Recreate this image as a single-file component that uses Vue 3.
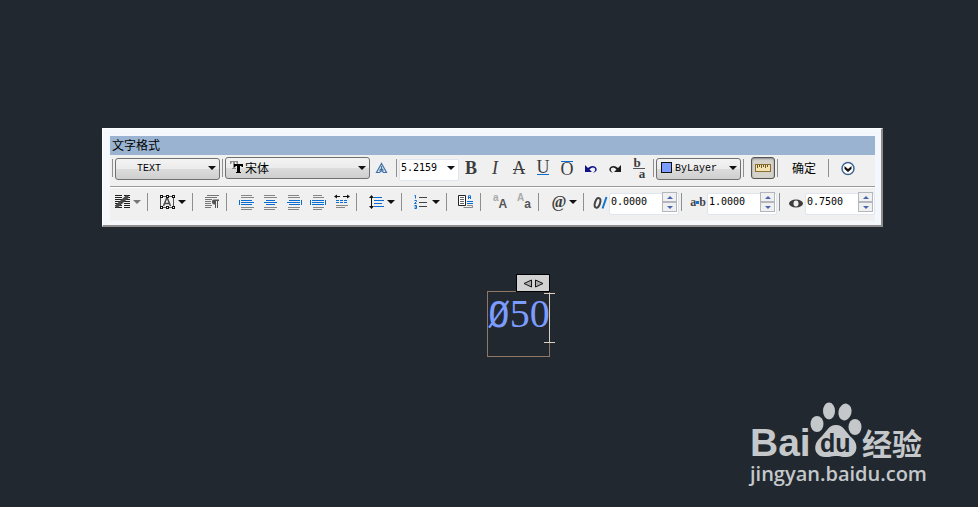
<script setup>
import { ref } from 'vue'

const textStyle = ref('TEXT')
const font = ref('宋体')
const height = ref('5.2159')
const color = ref('ByLayer')
const oblique = ref('0.0000')
const tracking = ref('1.0000')
const widthFactor = ref('0.7500')

const aligns = [
  { name: '左对齐', gray: 'M3 1.5h11M3 3.5h13M3 13.5h13M3 15.5h11', blue: 'M3 6.5h11M3 8.5h13M3 10.5h11M1.5 6v5' },
  { name: '居中', gray: 'M2 1.5h11M2 3.5h13M2 13.5h13M2 15.5h11', blue: 'M4 6.5h9M2 8.5h13M4 10.5h9' },
  { name: '右对齐', gray: 'M2 1.5h11M2 3.5h12M2 13.5h12M2 15.5h11', blue: 'M3 6.5h11M1 8.5h13M3 10.5h11M15.5 6v5' },
  { name: '对正', gray: 'M3 1.5h9M3 3.5h11M3 13.5h11M3 15.5h9', blue: 'M2 6.5h12M2 8.5h12M2 10.5h12M.5 6v5M15.5 6v5' },
]

function step(model, delta) {
  model.value = (parseFloat(model.value) + delta).toFixed(4)
}
const spins = [
  { id: 'oblique', label: '倾斜角度', model: oblique, delta: 1 },
  { id: 'tracking', label: '追踪', model: tracking, delta: 0.1 },
  { id: 'width', label: '宽度因子', model: widthFactor, delta: 0.1 },
]
</script>

<template>
  <main class="page">
    <section class="panel" aria-label="文字格式">
      <h1 class="title">文字格式</h1>

      <div class="row row-top">
        <i class="sep tight"></i>
        <div class="combo style-combo">
          <select v-model="textStyle" aria-label="样式"><option>TEXT</option></select>
          <svg class="caret" viewBox="0 0 8 4"><path d="M0 0h8L4 4z" /></svg>
        </div>
        <i class="sep tight"></i>
        <div class="combo font-combo">
          <svg class="lead" viewBox="0 0 14 14">
            <path d="M0 1h8v3H7L6 2H5v6h1v1H2V8h1V2H2L1 4H0z" fill="#8a8a8a" />
            <path d="M4 4h9v3h-1l-1-1h-1v6h1v1H6v-1h1V6H6L5 7H4z" fill="#000" />
          </svg>
          <select v-model="font" aria-label="字体"><option>宋体</option></select>
          <svg class="caret" viewBox="0 0 8 4"><path d="M0 0h8L4 4z" /></svg>
        </div>
        <button class="tool" aria-label="注释性">
          <svg viewBox="0 0 16 16" fill="none" stroke="#3f72a8" stroke-width="1.2">
            <path d="M7.500 3.500L2.500 12.500H5.500L7.500 10.500L9.500 12.500H12.500ZM7.500 6V10M5.500 10.500L7.500 8.500L9.500 10.500" />
          </svg>
        </button>
        <i class="sep tight"></i>
        <div class="combo-box">
          <input v-model="height" aria-label="文字高度" />
          <svg class="caret" viewBox="0 0 8 4"><path d="M0 0h8L4 4z" /></svg>
        </div>
        <button class="tool glyph bold" aria-label="粗体">B</button>
        <button class="tool glyph italic" aria-label="斜体">I</button>
        <button class="tool glyph strike" aria-label="删除线">A</button>
        <button class="tool glyph under" aria-label="下划线">U</button>
        <button class="tool glyph over" aria-label="上划线">O</button>
        <button class="tool" aria-label="放弃">
          <svg viewBox="0 0 16 16">
            <path d="M2 5v7h7L6.500 9.500Q9 6.500 11.500 8Q13.500 10 10 13Q16 10.500 12.500 7Q9 4.500 5 8z" fill="#10108a" />
          </svg>
        </button>
        <button class="tool" aria-label="重做">
          <svg viewBox="0 0 16 16">
            <path d="M14 5v7H7l2.500-2.500Q7 6.500 4.500 8Q2.500 10 6 13Q0 10.500 3.500 7Q7 4.500 11 8z" fill="#1c1c1c" />
          </svg>
        </button>
        <button class="tool stack" aria-label="堆叠"><span>b</span><span>a</span></button>
        <i class="sep tight"></i>
        <div class="combo color-combo">
          <i class="swatch"></i>
          <select v-model="color" aria-label="颜色"><option>ByLayer</option></select>
          <svg class="caret" viewBox="0 0 8 4"><path d="M0 0h8L4 4z" /></svg>
        </div>
        <i class="sep tight"></i>
        <button class="ruler" aria-label="标尺" aria-pressed="true">
          <svg viewBox="0 0 16 8">
            <rect x=".5" y=".5" width="15" height="7" fill="#f4e3b0" stroke="#8b6f2e" />
            <path d="M2.500 1v3M4.500 1v2M6.500 1v3M8.500 1v2M10.500 1v3M12.500 1v2" stroke="#6f5722" />
          </svg>
        </button>
        <i class="sep tight"></i>
        <button class="ok">确定</button>
        <i class="sep tight"></i>
        <button class="more" aria-label="选项">
          <svg viewBox="0 0 16 16">
            <circle cx="8" cy="8.500" r="6" fill="#fff" stroke="#3d6795" stroke-width="1.500" />
            <path d="M4.500 6l3.500 3 3.500-3v3L8 12 4.500 9z" fill="#111" />
          </svg>
        </button>
      </div>

      <div class="row row-bottom">
        <button class="drop" aria-label="分栏">
          <svg viewBox="0 0 16 16">
            <path d="M0 1.500h7M9 1.500h6M0 3.500h7M9 3.500h6M0 5.500h7M9 5.500h6M0 7.500h7M9 7.500h6M0 9.500h7M9 9.500h6M0 11.500h7M9 11.500h6M0 13.500h7M9 13.500h6" stroke="#222" />
            <path d="M1 13L13 2" stroke="#4a4a4a" stroke-width="3.500" />
          </svg>
          <svg class="caret dim" viewBox="0 0 8 4"><path d="M0 0h8L4 4z" /></svg>
        </button>
        <i class="sep"></i>
        <button class="drop" aria-label="多行文字对正">
          <svg viewBox="0 0 16 16">
            <path d="M.5 2.500h13v11h-13z" fill="none" stroke="#555" />
            <path d="M3.500 12L6.500 4.500h1L10.500 12M4.500 9.500h5" fill="none" stroke="#4a4a4a" stroke-width="1.500" />
            <path d="M0 1h3v3H0zM6 1h3v3H6zM12 1h3v3h-3zM0 12h3v3H0zM6 12h3v3H6zM12 12h3v3h-3z" fill="#111" />
            <path d="M1 2h1v1H1zM7 2h1v1H7zM13 2h1v1h-1zM1 13h1v1H1zM7 13h1v1H7zM13 13h1v1h-1z" fill="#fff" />
          </svg>
          <svg class="caret" viewBox="0 0 8 4"><path d="M0 0h8L4 4z" /></svg>
        </button>
        <i class="sep"></i>
        <button class="tool" aria-label="段落">
          <svg viewBox="0 0 16 16">
            <path d="M3 1.500h12M1 3.500h12M1 5.500h7M1 7.500h6M1 9.500h6M1 11.500h7M1 13.500h6" stroke="#777" />
            <path d="M15 5.500H10a2.500 2.500 0 0 0 1 5v3.500h1V7h1v7h1V7h1z" fill="#555" />
          </svg>
        </button>
        <i class="sep"></i>
        <button v-for="a in aligns" :key="a.name" class="tool" :aria-label="a.name">
          <svg viewBox="0 0 16 16">
            <path :d="a.gray" stroke="#858585" />
            <path :d="a.blue" stroke="#0a6cd0" />
          </svg>
        </button>
        <button class="tool" aria-label="分布">
          <svg viewBox="0 0 16 16">
            <path d="M1 2.500h5M9 2.500h6" stroke="#111" />
            <path d="M0 2.500L3 .5v4zM16 2.500L13 .5v4z" fill="#111" />
            <path d="M2 6.500h12M2 8.500h12" stroke="#0a6cd0" stroke-dasharray="3 1" />
            <path d="M2 11.500h12M2 13.500h9" stroke="#858585" />
          </svg>
        </button>
        <i class="sep"></i>
        <button class="drop" aria-label="行距">
          <svg viewBox="0 0 16 16">
            <path d="M2.500 3v10" stroke="#111" />
            <path d="M2.500 1L0 4h5zM2.500 15L0 12h5z" fill="#111" />
            <path d="M5 3.500h8M5 6.500h10M5 9.500h8M5 12.500h10" stroke="#0a6cd0" />
          </svg>
          <svg class="caret" viewBox="0 0 8 4"><path d="M0 0h8L4 4z" /></svg>
        </button>
        <i class="sep"></i>
        <button class="drop" aria-label="编号">
          <svg viewBox="0 0 16 16">
            <path d="M.5 1.500h1v3M.5 6.500h2v1L.5 9.500h2M.5 11.500h2v3H.5M.5 13h2" fill="none" stroke="#0a6cd0" />
            <path d="M5 3.500h8M5 8.500h8M5 12.500h8" stroke="#444" />
          </svg>
          <svg class="caret" viewBox="0 0 8 4"><path d="M0 0h8L4 4z" /></svg>
        </button>
        <i class="sep"></i>
        <button class="tool" aria-label="插入字段">
          <svg viewBox="0 0 16 16">
            <path d="M.5 1.500h7v10h-7z" fill="#fff" stroke="#222" />
            <path d="M2 3.500h4M2 5.500h4M2 7.500h4M2 9.500h4" stroke="#666" />
            <path d="M10.500 5V2l1-1 1 1v3M10.500 3.500h2M9 7.500h6M9 9.500h6" fill="none" stroke="#0a6cd0" />
            <path d="M5.500 13.500h9v-2H9" fill="none" stroke="#888" />
          </svg>
        </button>
        <i class="sep"></i>
        <button class="tool case" aria-label="大写"><span>a</span><span>A</span></button>
        <button class="tool case" aria-label="小写"><span>A</span><span>a</span></button>
        <i class="sep"></i>
        <button class="drop at" aria-label="符号">
          <span>@</span>
          <svg class="caret" viewBox="0 0 8 4"><path d="M0 0h8L4 4z" /></svg>
        </button>
        <template v-for="s in spins" :key="s.id">
          <i class="sep"></i>
          <label class="mark" :for="s.id" :aria-label="s.label">
            <svg v-if="s.id === 'oblique'" viewBox="0 0 16 16">
              <ellipse cx="5.500" cy="9" rx="2.500" ry="5" transform="rotate(18 6 9)" fill="none" stroke="#444" stroke-width="2" />
              <path d="M10.500 14.500L14.500 3" stroke="#1273d0" stroke-width="2" />
            </svg>
            <span v-else-if="s.id === 'tracking'" class="ab">a<i></i>b</span>
            <svg v-else viewBox="0 0 16 16">
              <ellipse cx="8" cy="9.500" rx="7" ry="4" fill="#3c3c3c" />
              <ellipse cx="8" cy="9.500" rx="2.500" ry="3" fill="#f0f0f0" />
            </svg>
          </label>
          <div class="spin">
            <input :id="s.id" v-model="s.model.value" />
            <span class="steps">
              <button aria-label="增加" @click="step(s.model, s.delta)">
                <svg viewBox="0 0 6 3"><path d="M3 0l3 3H0z" /></svg>
              </button>
              <button aria-label="减少" @click="step(s.model, -s.delta)">
                <svg viewBox="0 0 6 3"><path d="M0 0h6L3 3z" /></svg>
              </button>
            </span>
          </div>
        </template>
      </div>
    </section>

    <div class="mtext">
      <span class="tab">
        <svg viewBox="0 0 20 9" fill="#aaa" stroke="#111">
          <path d="M8.500 1v7L1 4.500zM12.500 1v7L20 4.500z" />
        </svg>
      </span>
      <span class="dia">Ø</span><span class="digits">50</span>
      <i class="cursor"></i>
    </div>

    <div class="watermark">
      <div class="brand">
        <span class="bai">Bai</span>
        <span class="paw">
          <svg viewBox="0 0 52 56">
            <ellipse cx="7" cy="22" rx="6.500" ry="8" />
            <ellipse cx="19" cy="9" rx="6" ry="8.500" />
            <ellipse cx="35" cy="10" rx="6.500" ry="8.500" transform="rotate(12 35 10)" />
            <ellipse cx="45" cy="25" rx="6.500" ry="8" />
            <path d="M26 23C34 23 36 31 42 36C49 42 48 54 37 55C32 55.500 31 54 26 54C21 54 20 55.500 15 55C3 54 3 42 10 36C16 31 18 23 26 23Z" />
          </svg>
          <span class="du">du</span>
        </span>
        <span class="exp">经验</span>
      </div>
      <div class="url">jingyan.baidu.com</div>
    </div>
  </main>
</template>

<style>
body {
  background: #212830;
}
</style>

<style scoped>
.page {
  position: relative;
  min-height: 100vh;
  box-sizing: border-box;
  padding: 128px 95px 0 102px;
  overflow: hidden;
  background: #212830;
  font-family: "Liberation Sans", "Noto Sans CJK SC", sans-serif;
}
* {
  box-sizing: border-box;
}
button {
  padding: 0;
  border: 0;
  background: none;
  color: #3c3c3c;
}
.panel {
  padding: 7px 6px 4px 7px;
  background: #f4f7fc;
  border: 1px solid #fff;
  border-right: 2px solid #8c8c8c;
  border-bottom: 2px solid #8c8c8c;
}
.title {
  height: 19px;
  margin: 0;
  padding-left: 2px;
  background: #99b3d1;
  color: #000;
  font: 400 12px/18px "Noto Sans CJK SC", sans-serif;
}
.row {
  display: flex;
  background: #f0f0f0;
}
.row-top {
  height: 31px;
  padding-top: 2px;
}
.row-bottom {
  height: 35px;
  padding-top: 4px;
  border-top: 1px solid #999;
  box-shadow: inset 0 1px #fff;
}
.row > * {
  flex: none;
  height: 22px;
}
.sep {
  width: 1px;
  margin: 0 7px 0 2px;
  background: #8f8f8f;
  background-clip: content-box;
  padding: 2px 0;
}
.sep.tight {
  margin: 0 2px;
}
.caret {
  width: 8px;
  height: 4px;
  fill: #111;
}
.caret.dim {
  fill: #777;
}
.combo,
.combo-box {
  position: relative;
}
.combo select {
  width: 100%;
  height: 22px;
  padding: 0 16px 0 21px;
  appearance: none;
  border: 1px solid #707070;
  border-radius: 3px;
  background: linear-gradient(#f3f3f3, #ebebeb 50%, #dcdcdc 50%, #cfcfcf);
  color: #000;
  font: 10px "Liberation Mono", monospace;
}
.combo .caret,
.combo-box .caret {
  position: absolute;
  top: 9px;
  right: 4px;
}
.style-combo {
  width: 105px;
}
.font-combo {
  width: 145px;
}
.font-combo select {
  padding-left: 19px;
  padding-bottom: 2px;
  font: 12px "Noto Sans CJK SC", sans-serif;
}
.color-combo {
  width: 85px;
}
.color-combo select {
  padding-left: 18px;
}
.lead {
  position: absolute;
  top: 3px;
  left: 5px;
  width: 14px;
  height: 14px;
}
.swatch {
  position: absolute;
  top: 5px;
  left: 5px;
  width: 11px;
  height: 11px;
  border: 1px solid #111;
  background: #7c9cff;
}
input {
  width: 100%;
  height: 22px;
  padding: 0 1px 4px;
  border: 1px solid #e0e5ee;
  border-radius: 2px;
  background: #fff;
  color: #000;
  font: 10px "DejaVu Sans Mono", monospace;
}
.combo-box {
  width: 60px;
}
.tool {
  display: flex;
  align-items: center;
  justify-content: center;
  width: 24px;
}
.tool svg,
.drop svg:first-child,
.mark svg,
.more svg {
  flex: none;
  width: 16px;
  height: 16px;
}
.glyph {
  position: relative;
  font: 18px/22px "Liberation Serif", serif;
}
.bold {
  font-weight: 700;
}
.italic {
  font-style: italic;
}
.strike::after,
.under::after,
.over::after {
  content: "";
  position: absolute;
  left: 6px;
  right: 6px;
  height: 1px;
  background: #0a6cd0;
}
.strike::after {
  top: 12px;
  background: #3c3c3c;
}
.under {
  padding-bottom: 2px;
}
.under::after {
  bottom: 4px;
}
.over {
  padding-top: 2px;
}
.over::after {
  top: 4px;
}
.stack {
  flex-direction: column;
  font: 700 13px/9px "Liberation Serif", serif;
}
.stack span:first-child {
  padding: 0 4px 1px 0;
  border-bottom: 1px solid #555;
}
.stack span:last-child {
  padding-left: 6px;
}
.ruler {
  display: flex;
  align-items: center;
  justify-content: center;
  width: 24px;
  margin-left: 5px;
  border: 1px solid #555;
  border-radius: 3px;
  background: #d6d3cd;
  box-shadow: inset 0 1px 2px #888;
}
.ruler svg {
  width: 16px;
  height: 8px;
}
.ok {
  width: 46px;
  padding-left: 2px;
  color: #000;
  font: 12px/22px "Noto Sans CJK SC", sans-serif;
}
.more {
  display: flex;
  align-items: center;
  justify-content: center;
  width: 34px;
}
.drop {
  display: flex;
  align-items: center;
  gap: 2px;
  width: 35px;
  padding-left: 5px;
}
.at {
  font: 700 16px/20px "Liberation Serif", serif;
}
.at span {
  width: 16px;
}
.case {
  align-items: flex-start;
  font: 700 10px/10px "Liberation Sans", sans-serif;
  color: #aaa;
}
.case span:last-child {
  padding-top: 6px;
  color: #555;
  font-size: 12px;
  line-height: 14px;
}
.case span:first-child {
  padding-top: 2px;
}
.mark {
  display: flex;
  align-items: center;
  justify-content: center;
  width: 18px;
}
.ab {
  display: flex;
  align-items: center;
  color: #444;
  font: 700 12px/22px "Liberation Serif", serif;
}
.ab i {
  width: 3px;
  height: 3px;
  background: #1273d0;
}
.spin {
  position: relative;
  width: 70px;
}
.steps {
  position: absolute;
  top: 1px;
  right: 2px;
  display: grid;
  grid-template-rows: 10px 10px;
  width: 15px;
}
.steps button {
  display: flex;
  align-items: center;
  justify-content: center;
  border: 1px solid #b3b7bd;
  background: #f0f0f0;
}
.steps svg {
  width: 6px;
  height: 3px;
  fill: #4a64b0;
}
.mtext {
  position: absolute;
  top: 291px;
  left: 487px;
  display: flex;
  align-items: baseline;
  width: 63px;
  height: 66px;
  border: 1px solid #8f7665;
  color: #7c9cff;
  line-height: 44px;
}
.dia {
  width: 22px;
  font-family: "DejaVu Sans Mono", monospace;
  font-size: 36px;
}
.digits {
  font-family: "Liberation Serif", serif;
  font-size: 40px;
}
.tab {
  position: absolute;
  top: -18px;
  right: -1px;
  display: flex;
  align-items: center;
  justify-content: center;
  width: 34px;
  height: 18px;
  border: 1px solid #000;
  background: #d2d2d2;
}
.tab svg {
  width: 20px;
  height: 9px;
}
.cursor {
  position: absolute;
  top: 1px;
  right: -6px;
  width: 11px;
  height: 50px;
  border: solid #d9cfc4;
  border-width: 1px 0;
  background: linear-gradient(#d9cfc4, #d9cfc4) center / 1px 100% no-repeat;
}
.watermark {
  position: absolute;
  right: 53px;
  bottom: 19px;
  width: 175px;
  color: #c5c8ca;
}
.brand {
  display: flex;
  align-items: flex-end;
  margin-bottom: 2px;
}
.bai {
  width: 60px;
  font: 700 39px/30px "Liberation Sans", sans-serif;
}
.paw {
  position: relative;
  width: 52px;
}
.paw svg {
  display: block;
  width: 52px;
  height: 56px;
  fill: currentColor;
}
.du {
  position: absolute;
  left: 10px;
  bottom: 4px;
  color: #212830;
  font: 700 25px/22px "Liberation Sans", sans-serif;
}
.exp {
  font: 700 30px/32px "Noto Sans CJK SC", sans-serif;
}
.url {
  font: 600 20px/28px "Open Sans", sans-serif;
}
</style>
